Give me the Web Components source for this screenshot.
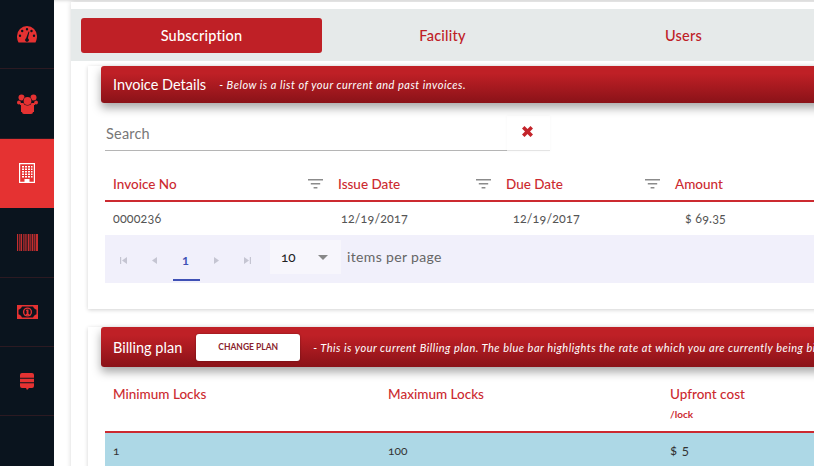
<!DOCTYPE html>
<html><head><meta charset="utf-8"><style>
html,body{margin:0;padding:0;width:814px;height:466px;overflow:hidden;background:#fff;font-family:Lato,"Open Sans",sans-serif;font-variant-numeric:oldstyle-nums;}
</style></head><body>
<app-shell>
<side-nav slot="nav"></side-nav>
<tab-bar></tab-bar>
<app-card first>
  <bar-header slot="head" style="--head-h:37px" title-text="Invoice Details" note="- Below is a list of your current and past invoices."></bar-header>
  <invoice-search></invoice-search>
  <invoice-table></invoice-table>
  <pager-bar></pager-bar>
</app-card>
<app-card>
  <bar-header slot="head" style="--head-h:40px" title-text="Billing plan" button="CHANGE PLAN" note="- This is your current Billing plan. The blue bar highlights the rate at which you are currently being billed."></bar-header>
  <plan-table></plan-table>
</app-card>
</app-shell>
<script>
const def=(name,html)=>customElements.define(name,class extends HTMLElement{
  connectedCallback(){ if(this.shadowRoot)return; const r=this.attachShadow({mode:'open'}); r.innerHTML=typeof html==='function'?html(this):html; }
});
const filt=`<svg width="15" height="12" viewBox="0 0 15 12"><path d="M0 1h15v1.600H0zM2.800 5h9.400v1.600H2.800zM5.600 9h3.800v1.600H5.600z" fill="#8b8b8b"/></svg>`;
def('app-shell',`<style>
:host{display:flex;width:814px;height:466px;overflow:hidden;background:#fff}
.main{flex:none;width:760px;height:466px;padding:2px 0 0 17px;box-sizing:border-box;overflow:hidden;box-shadow:inset 0 3px 3px -2px #ddd}
.panel{width:760px;min-height:480px;padding-top:7px;background:#fff;box-shadow:0 0 5px rgba(0,0,0,.16)}
</style><slot name="nav"></slot><div class="main"><div class="panel"><slot></slot></div></div>`);
const R='#e53232';
const icons=[
`<svg width="20" height="17" viewBox="0 0 20 17"><path fill-rule="evenodd" fill="${R}" d="M10 0a10 10 0 0 1 10 10c0 2.500-.6 4.700-1.500 6.500H1.500A13 13 0 0 1 0 10 10 10 0 0 1 10 0zM10 2a1.200 1.200 0 1 0 0 2.400A1.200 1.200 0 0 0 10 2zM5.200 3.800a1.200 1.200 0 1 0 0 2.400 1.200 1.200 0 0 0 0-2.400zM3 8.500a1.200 1.200 0 1 0 0 2.400 1.200 1.200 0 0 0 0-2.400zM17 8.500a1.200 1.200 0 1 0 0 2.400 1.200 1.200 0 0 0 0-2.400zM14.500 3.800a1.200 1.200 0 1 0 0 2.400 1.200 1.200 0 0 0 0-2.400zM11.600 5.500l-2.500 6.700a2 2 0 0 0-1 1.800c0 1 .9 1.800 1.900 1.800s1.900-.8 1.900-1.800c0-.8-.4-1.400-1-1.700l1.500-6.600z"/></svg>`,
`<svg width="21" height="20" viewBox="0 0 21 20"><g fill="${R}"><circle cx="4.500" cy="3.500" r="3"/><circle cx="16.500" cy="3.500" r="3"/><circle cx="1.900" cy="8.500" r="1.900"/><circle cx="19.100" cy="8.500" r="1.900"/><path d="M3 9h15v2h-1v7H4v-7H3z"/><path d="M5 11h11v7a2 2 0 0 1-2 2H7a2 2 0 0 1-2-2z"/></g><circle cx="10.500" cy="7" r="4.600" fill="#0a141e"/><circle cx="10.500" cy="7" r="3.900" fill="${R}"/></svg>`,
`<svg width="16" height="20" viewBox="0 0 16 20"><path fill="#fff" fill-rule="evenodd" d="M0 0h16v20H0zM1.200 1.200v17.600h4.300V16h5v2.800h4.300V1.200zM3 3h2v1.500H3zM6 3h2v1.500H6zM9 3h2v1.500H9zM12 3h1.500v1.500H12zM3 5.500h2V7H3zM6 5.500h2V7H6zM9 5.500h2V7H9zM12 5.500h1.500V7H12zM3 8h2v1.500H3zM6 8h2v1.500H6zM9 8h2v1.500H9zM12 8h1.500v1.500H12zM3 10.500h2V12H3zM6 10.500h2V12H6zM9 10.500h2V12H9zM12 10.500h1.500V12H12zM3 13h2v1.500H3zM6 13h2v1.500H6zM9 13h2v1.500H9zM12 13h1.500v1.500H12z"/></svg>`,
`<svg width="21" height="17" viewBox="0 0 21 17"><path fill="${R}" opacity=".85" d="M0 0h1.200v17H0zM2 0h.7v17H2zM3.500 0h1.600v17H3.500zM6 0h.7v17H6zM7.500 0h1.200v17H7.500zM9.400 0h.7v17h-.7zM10.800 0h1.700v17h-1.700zM13.200 0h.7v17h-.7zM14.600 0h1.800v17h-1.800zM17.100 0h.8v17h-.8zM18.600 0H21v17h-2.400z"/></svg>`,
`<svg width="21" height="14" viewBox="0 0 21 14"><path fill="${R}" fill-rule="evenodd" d="M0 0h21v14H0zM5 1.500C4.500 3 3 4.300 1.500 4.800v4.400C3 9.700 4.500 11 5 12.500h11c.5-1.500 2-2.800 3.500-3.300V4.800C18 4.300 16.500 3 16 1.500z"/><circle cx="10.500" cy="7" r="4.600" fill="${R}"/><circle cx="10.500" cy="7" r="3.200" fill="#0a141e"/><path d="M9.500 4.500h2V9h.8v1H8.800V9h.8V6h-.8z" fill="${R}"/></svg>`,
`<svg width="14" height="17" viewBox="0 0 14 17"><path fill="${R}" d="M2 0h10a2 2 0 0 1 2 2v2.800H0V2a2 2 0 0 1 2-2zM0 5.800h14v3.400H0zM0 10.200h14V13a2 2 0 0 1-2 2H9l-2 2-1-2H2a2 2 0 0 1-2-2z"/></svg>`];
def('side-nav',`<style>
:host{display:flex;flex-direction:column;flex:none;width:54px;height:466px;background:#0a141e}
.i{height:69.400px;box-sizing:border-box;display:flex;align-items:center;justify-content:center;border-bottom:1px solid #2c1a22}
.i.a{background:${R};border-color:${R}}
</style>`+icons.map((s,i)=>`<div class="i${i==2?' a':''}">${s}</div>`).join(''));
def('tab-bar',`<style>
:host{display:flex;height:52px;padding:9px 0 8px 10px;box-sizing:border-box;background:#e6eaea;font:500 14.500px/35px Lato,sans-serif;letter-spacing:.2px;color:#bf2026;text-align:center}
div{flex:none;width:241px;height:35px;border-radius:3px}
.a{background:#bf2026;color:#fff}
</style><div class="a">Subscription</div><div>Facility</div><div>Users</div>`);
def('app-card',`<style>
:host{display:block;margin:37px 0 0 17px;background:#fff;box-shadow:0 1px 4px rgba(0,0,0,.18);padding:0 0 26px 17px;}
:host([first]){margin-top:24px}
::slotted([slot=head]){margin:-19px 0 0 -4px}
.b{width:800px}
</style><slot name="head"></slot><div class="b"><slot></slot></div>`);
def('bar-header',t=>`<style>
:host{display:flex;align-items:center;height:var(--head-h);width:760px;box-sizing:border-box;padding:0 12px;border-radius:3px 0 0 3px;background:linear-gradient(#bf2026 20%,#8a1218);color:#fff;box-shadow:0 5px 10px rgba(0,0,0,.35);white-space:nowrap;position:relative}
.t{font-size:14.500px;margin-right:${t.getAttribute('button')?'14px':'13px'}}
.n{font-size:11px;font-style:italic;letter-spacing:.5px}
button{all:unset;box-sizing:border-box;width:104px;height:27px;background:#fff;border-radius:3px;color:#8a1e2c;font:700 8.500px/27px Lato,sans-serif;text-align:center;margin-right:13px;box-shadow:0 0 2px rgba(0,0,0,.4)}
</style><span class="t">${t.getAttribute('title-text')}</span>${t.getAttribute('button')?`<button>${t.getAttribute('button')}</button>`:''}<span class="n">${t.getAttribute('note')}</span>`);
def('invoice-search',`<style>
:host{display:flex;height:35px;margin-top:13px;width:445px;color:#777;font-size:14.500px}
.f{width:402px;box-sizing:border-box;border-bottom:1px solid #b5b5b5;line-height:36px;padding-left:1px;letter-spacing:.2px}
.x{width:43px;box-sizing:border-box;border-bottom:1px solid #e4e4e4;display:flex;align-items:center;justify-content:center;padding:0 2px 3px 0;box-shadow:0 0 3px rgba(0,0,0,.04)}
</style><div class="f">Search</div><div class="x"><svg width="11" height="11" viewBox="0 0 11 11"><path d="M2.500 0L5.500 3 8.500 0 11 2.500 8 5.500 11 8.500 8.500 11 5.500 8 2.500 11 0 8.500 3 5.500 0 2.500z" fill="#c3242b"/></svg></div>`);
def('invoice-table',`<style>
:host{display:block;width:760px;font-size:13px;margin-top:2px}
.r{display:grid;grid-template-columns:225px 168px 169px 1fr}
.h{height:49px;padding-top:15px;border-bottom:2px solid #cc2a30;box-sizing:border-box;color:#cc2a30;font-size:13.500px;font-weight:500;align-items:center}
.h>div{display:flex;justify-content:space-between;align-items:center;padding:0 7px 0 8px}
.b{height:33px;align-items:center;color:#555;font-size:12.500px;letter-spacing:.15px}
.b>div:nth-child(1){padding-left:8px}
.b>div:nth-child(2){padding-left:11px}
.b>div:nth-child(3){padding-left:15px}
.b>div:nth-child(4){padding-left:18px}
</style><div class="r h"><div>Invoice No ${filt}</div><div>Issue Date ${filt}</div><div>Due Date ${filt}</div><div>Amount</div></div>
<div class="r b"><div>0000236</div><div>12/19/2017</div><div>12/19/2017</div><div>$ 69.35</div></div>`);
const pg=(d)=>`<svg width="9" height="9" viewBox="0 0 9 9"><path d="${d}" fill="#c5c5d2"/></svg>`;
def('pager-bar',`<style>
:host{display:flex;height:48px;width:720px;background:#f1f0fb;color:#666;font-size:14px}
.p{display:flex;width:165px;padding-top:5px}
.p>div{width:31px;height:43px;box-sizing:border-box;padding-top:16px;display:flex;justify-content:center;align-items:flex-start}
.p>div:first-child{margin-left:3px}
.cur{color:#3f51b5;font-size:12px;font-weight:700;position:relative;padding-top:14px!important;line-height:14px;font-variant-numeric:lining-nums}
.cur::after{content:"";position:absolute;left:3px;right:1px;bottom:2px;height:2px;background:#3f51b5}
.s{width:71px;height:34px;margin-top:5px;background:#f7f6fc;display:flex;align-items:center;justify-content:space-between;padding:0 13px 0 11px;box-sizing:border-box;color:#222;font-size:13.500px}
.t{margin:13px 0 0 6px;line-height:18px;letter-spacing:.35px}
</style><div class="p"><div>${pg('M1 1h1.200v7H1zM8 1v7L3 4.500z')}</div><div>${pg('M7 1v7L2 4.500z')}</div><div class="cur">1</div><div>${pg('M2 1v7l5-3.500z')}</div><div>${pg('M8 1H6.800v7H8zM1 1v7l5-3.500z')}</div></div>
<div class="s">10<svg width="10" height="5" viewBox="0 0 10 5"><path d="M0 0h10L5 5z" fill="#888"/></svg></div><div class="t">items per page</div>`);
def('plan-table',`<style>
:host{display:block;width:760px;margin-top:8px}
.r{display:grid;grid-template-columns:275px 282px 1fr}
.h{height:58px;border-bottom:2px solid #cc2a30;box-sizing:border-box;color:#cc2a30;font-size:13.500px;font-weight:500}
.h>div{padding:11px 8px 0}
small{display:block;font-size:10px;font-weight:700;margin-top:6px}
.b{height:34px;background:#add8e6;align-items:center;color:#333;font-size:12px}
.b>div{padding:0 8px}
.b>div:last-child{font-size:13.500px;word-spacing:1px}
</style><div class="r h"><div>Minimum Locks</div><div>Maximum Locks</div><div>Upfront cost<small>/lock</small></div></div>
<div class="r b"><div>1</div><div>100</div><div>$ 5</div></div>`);
</script>
</body></html>
